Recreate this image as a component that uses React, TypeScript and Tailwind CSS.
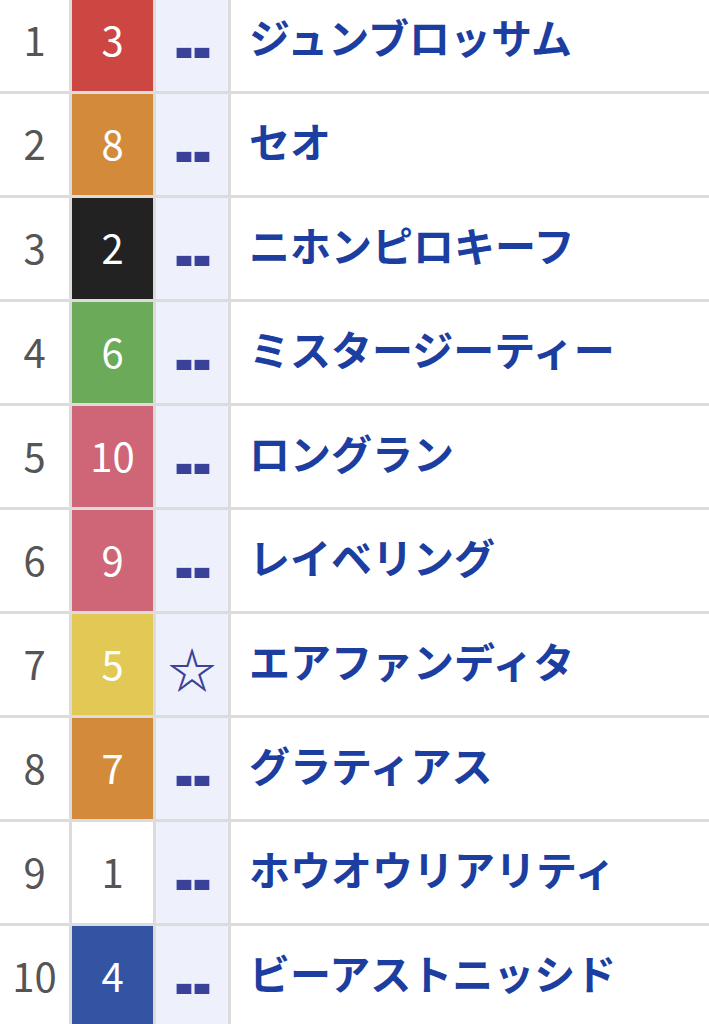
type Runner = { rank: number; waku: number; mark: string; name: string }

// 枠の色 (1枠=白 ... 8枠=桃 の表示色に合わせる)
const wakuColors: Record<number, string> = {
  1: 'bg-white text-[#555555]',
  2: 'bg-[#222222] text-white',
  3: 'bg-[#cc4741] text-white',
  4: 'bg-[#3353a3] text-white',
  5: 'bg-[#e2c955] text-white',
  6: 'bg-[#6aaa58] text-white',
  7: 'bg-[#d38b3b] text-white',
  8: 'bg-[#d38b3b] text-white',
  9: 'bg-[#cf6677] text-white',
  10: 'bg-[#cf6677] text-white',
}

const runners: Runner[] = [
  { rank: 1, waku: 3, mark: '--', name: 'ジュンブロッサム' },
  { rank: 2, waku: 8, mark: '--', name: 'セオ' },
  { rank: 3, waku: 2, mark: '--', name: 'ニホンピロキーフ' },
  { rank: 4, waku: 6, mark: '--', name: 'ミスタージーティー' },
  { rank: 5, waku: 10, mark: '--', name: 'ロングラン' },
  { rank: 6, waku: 9, mark: '--', name: 'レイベリング' },
  { rank: 7, waku: 5, mark: '☆', name: 'エアファンディタ' },
  { rank: 8, waku: 7, mark: '--', name: 'グラティアス' },
  { rank: 9, waku: 1, mark: '--', name: 'ホウオウリアリティ' },
  { rank: 10, waku: 4, mark: '--', name: 'ビーアストニッシド' },
]

export default function App() {
  return (
    <div
      className="w-[709px] h-[1024px] overflow-hidden bg-white"
      style={{ fontFamily: '"Noto Sans CJK JP", "Noto Sans", sans-serif' }}
    >
      <div className="-mt-[10px] grid grid-cols-[69px_81px_72px_1fr] auto-rows-[101px] gap-[3px] bg-[#dcdcdc] pb-[3px]">
        {runners.map((r) => (
          <Row key={r.rank} runner={r} />
        ))}
      </div>
    </div>
  )
}

function Row({ runner }: { runner: Runner }) {
  return (
    <>
      {/* 着順 */}
      <div className="flex items-center justify-center bg-white pb-[3px] text-[40px] leading-none text-[#555555]">
        {runner.rank}
      </div>
      {/* 馬番 */}
      <div
        className={`flex items-center justify-center pb-[3px] text-[40px] leading-none ${wakuColors[runner.waku]}`}
      >
        {runner.waku}
      </div>
      {/* 印 */}
      <div className="flex items-center justify-center bg-[#eef1fb] text-[#3a4199]">
        {runner.mark === '☆' ? (
          <span className="mt-[4px] text-[48px] font-bold leading-none">☆</span>
        ) : (
          <span className="mt-[12px] scale-y-[1.5] font-['DejaVu_Sans',sans-serif] text-[48px] font-bold leading-none tracking-[-2px]">
            --
          </span>
        )}
      </div>
      {/* 馬名 */}
      <div className="flex items-center bg-white pb-[8px] pl-[18px] text-[41px] font-bold leading-none text-[#1b3ea0]">
        {runner.name}
      </div>
    </>
  )
}
